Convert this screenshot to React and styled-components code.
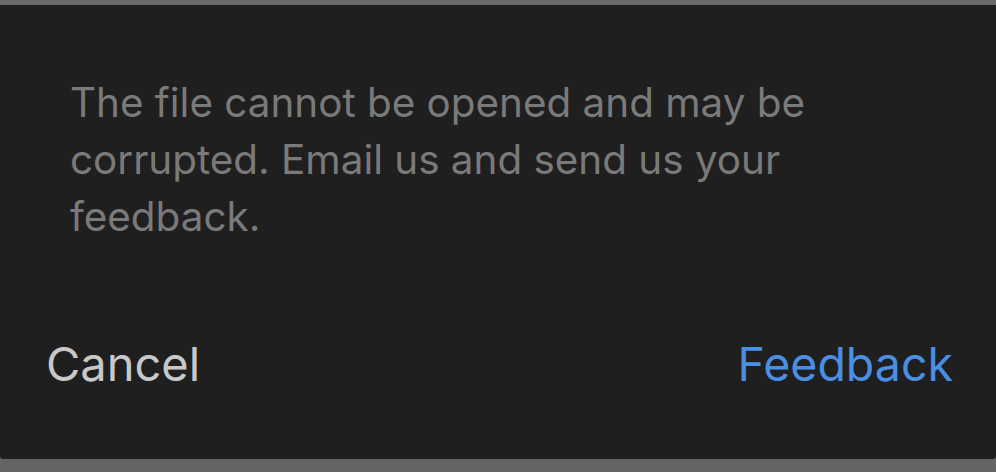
import React from 'react'
import styled, { createGlobalStyle } from 'styled-components'

const GlobalStyle = createGlobalStyle`
  html, body {
    margin: 0;
    padding: 0;
    background: #666666;
  }
  body {
    font-family: Inter, 'Noto Sans', sans-serif;
  }
`

const Backdrop = styled.div`
  width: 996px;
  height: 472px;
  padding: 5px 0 13px;
  box-sizing: border-box;
  background: linear-gradient(#6b6b6b, #636363);
`

const Dialog = styled.div`
  height: 100%;
  background: #1f1f1f;
  border-radius: 0 0 3px 3px;
  display: flex;
  flex-direction: column;
  justify-content: space-between;
  padding: 69px 43px 67px 46px;
  box-sizing: border-box;
`

const Message = styled.p`
  margin: 0 0 0 24px;
  max-width: 780px;
  font-size: 40.4px;
  line-height: 57px;
  color: #7a7a7a;
`

const Actions = styled.div`
  display: flex;
  justify-content: space-between;
  align-items: baseline;
`

const ActionButton = styled.button`
  border: 0;
  background: none;
  padding: 0;
  font-family: inherit;
  font-size: ${p => (p.$primary ? '46.5px' : '47px')};
  color: ${p => (p.$primary ? '#4a8fe2' : '#c8c8c8')};
  cursor: pointer;
`

const App = () => (
  <>
    <GlobalStyle />
    <Backdrop>
      <Dialog>
        <Message>
          The file cannot be opened and may be corrupted. Email us and send us your feedback.
        </Message>
        <Actions>
          <ActionButton>Cancel</ActionButton>
          <ActionButton $primary>Feedback</ActionButton>
        </Actions>
      </Dialog>
    </Backdrop>
  </>
)

export default App
